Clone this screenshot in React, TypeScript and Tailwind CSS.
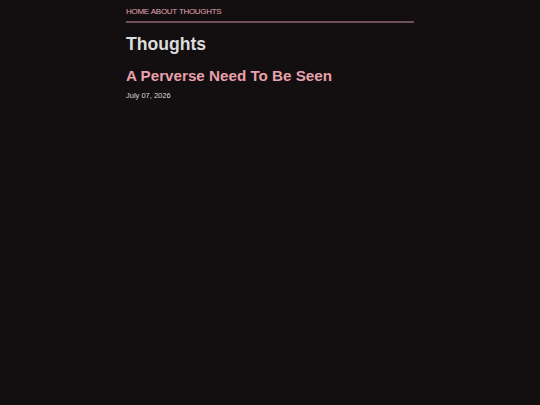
import React from "react";

const App: React.FC = () => {
  return (
    <div
      className="min-h-screen bg-[#130e10]"
      style={{ fontFamily: '"Liberation Sans", Arial, sans-serif' }}
    >
      <div className="w-[288px] mx-auto pt-[6px]">
        <nav className="flex gap-[2px] text-[8px] tracking-[-0.3px] leading-[11px] text-[#e4a4b4] pb-[4px] border-b-2 border-[#6e5059]">
          <a href="#">HOME</a>
          <a href="#">ABOUT</a>
          <a href="#">THOUGHTS</a>
        </nav>

        <h1 className="mt-[10px] text-[17.6px] leading-[22px] font-bold text-[#dcdcdc]">
          Thoughts
        </h1>

        {/* Posts */}
        <article className="mt-[12px]">
          <h2 className="text-[15.2px] leading-[18px] font-bold text-[#e8a2ab]">
            A Perverse Need To Be Seen
          </h2>
          <p className="mt-[6px] text-[7.5px] leading-[9px] text-[#d8d8d8]">
            July 07, 2026
          </p>
        </article>
      </div>
    </div>
  );
};

export default App;
